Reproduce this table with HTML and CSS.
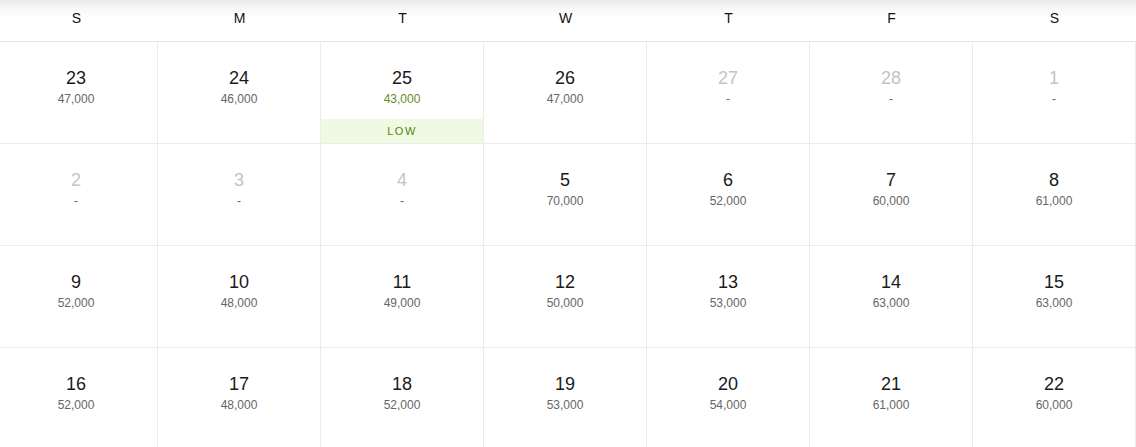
FILE: index.html
```html
<!DOCTYPE html>
<html>
<head>
<meta charset="utf-8">
<link rel="stylesheet" href="styles.css">
</head>
<body>
<div class="cal">
  <div class="head">
    <div class="dow">S</div><div class="dow">M</div><div class="dow">T</div><div class="dow">W</div><div class="dow">T</div><div class="dow">F</div><div class="dow">S</div>
  </div>
  <div class="grid">
    <div class="cell"><div class="num">23</div><div class="price">47,000</div></div>
    <div class="cell"><div class="num">24</div><div class="price">46,000</div></div>
    <div class="cell"><div class="num">25</div><div class="price low">43,000</div><div class="badge">LOW</div></div>
    <div class="cell"><div class="num">26</div><div class="price">47,000</div></div>
    <div class="cell off"><div class="num">27</div><div class="price">-</div></div>
    <div class="cell off"><div class="num">28</div><div class="price">-</div></div>
    <div class="cell off"><div class="num">1</div><div class="price">-</div></div>

    <div class="cell off"><div class="num">2</div><div class="price">-</div></div>
    <div class="cell off"><div class="num">3</div><div class="price">-</div></div>
    <div class="cell off"><div class="num">4</div><div class="price">-</div></div>
    <div class="cell"><div class="num">5</div><div class="price">70,000</div></div>
    <div class="cell"><div class="num">6</div><div class="price">52,000</div></div>
    <div class="cell"><div class="num">7</div><div class="price">60,000</div></div>
    <div class="cell"><div class="num">8</div><div class="price">61,000</div></div>

    <div class="cell"><div class="num">9</div><div class="price">52,000</div></div>
    <div class="cell"><div class="num">10</div><div class="price">48,000</div></div>
    <div class="cell"><div class="num">11</div><div class="price">49,000</div></div>
    <div class="cell"><div class="num">12</div><div class="price">50,000</div></div>
    <div class="cell"><div class="num">13</div><div class="price">53,000</div></div>
    <div class="cell"><div class="num">14</div><div class="price">63,000</div></div>
    <div class="cell"><div class="num">15</div><div class="price">63,000</div></div>

    <div class="cell"><div class="num">16</div><div class="price">52,000</div></div>
    <div class="cell"><div class="num">17</div><div class="price">48,000</div></div>
    <div class="cell"><div class="num">18</div><div class="price">52,000</div></div>
    <div class="cell"><div class="num">19</div><div class="price">53,000</div></div>
    <div class="cell"><div class="num">20</div><div class="price">54,000</div></div>
    <div class="cell"><div class="num">21</div><div class="price">61,000</div></div>
    <div class="cell"><div class="num">22</div><div class="price">60,000</div></div>
  </div>
</div>
</body>
</html>
```

FILE: styles.css
```css
html, body {
  margin: 0;
  padding: 0;
  background: #fff;
  overflow: hidden;
}
body {
  font-family: "Liberation Sans", Arial, sans-serif;
  color: #222;
}
.cal {
  width: 1141px;
  margin-left: -5px;
  background: linear-gradient(to bottom, #e9e9e9 0px, #f7f7f7 8px, #ffffff 18px, #ffffff 100%);
}
.head {
  display: grid;
  grid-template-columns: repeat(7, 163px);
  height: 41px;
  border-bottom: 1px solid #e8e8e8;
}
.dow {
  text-align: center;
  font-size: 14px;
  line-height: 14px;
  padding-top: 11px;
  color: #111;
}
.grid {
  display: grid;
  grid-template-columns: repeat(7, 163px);
  grid-auto-rows: 102px;
  background: #fff;
}
.cell {
  border-right: 1px solid #ececec;
  border-bottom: 1px solid #ececec;
  display: flex;
  flex-direction: column;
  align-items: stretch;
  text-align: center;
  padding-top: 26px;
  box-sizing: border-box;
}
.num {
  font-size: 18px;
  line-height: 20px;
  color: #1a1a1a;
}
.price {
  font-size: 12px;
  line-height: 14px;
  margin-top: 4px;
  color: #666;
}
.price.low {
  color: #6a8a1e;
}
.off .num {
  color: #c4c4c4;
}
.badge {
  margin-top: auto;
  height: 24px;
  line-height: 24px;
  background: #effae2;
  color: #5c7f14;
  font-size: 11px;
  letter-spacing: 1.5px;
}
```
